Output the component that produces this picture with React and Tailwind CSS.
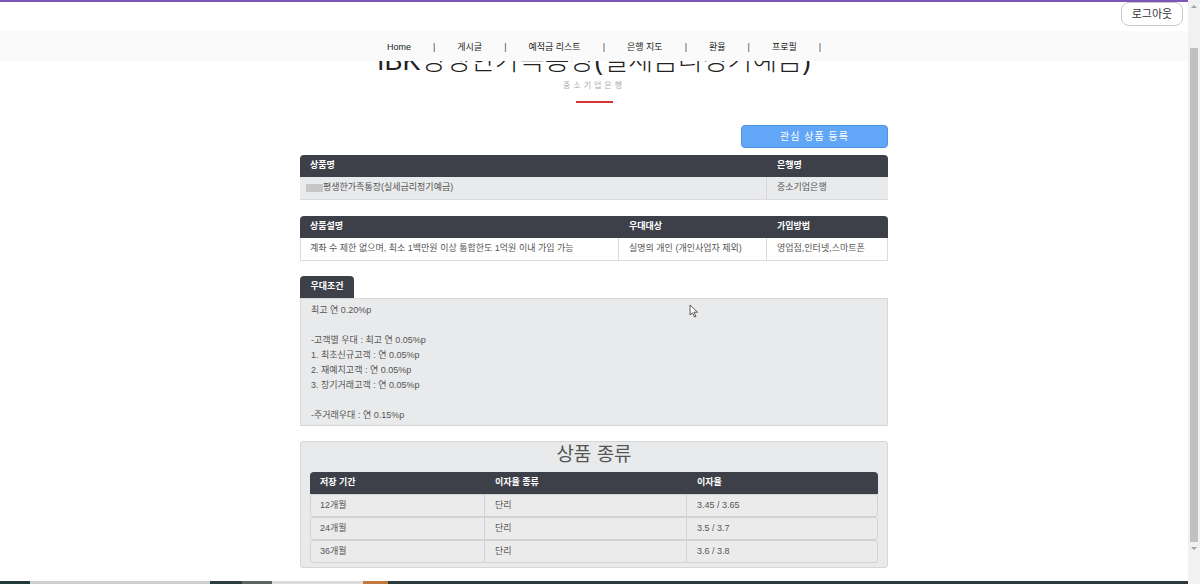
const font = { fontFamily: '"Liberation Sans", "Noto Sans CJK KR", sans-serif' };

const navItems = ['Home', '게시글', '예적금 리스트', '은행 지도', '환율', '프로필'];

const benefits = [
  '최고 연 0.20%p',
  '',
  '-고객별 우대 : 최고 연 0.05%p',
  '1. 최초신규고객 : 연 0.05%p',
  '2. 재예치고객 : 연 0.05%p',
  '3. 장기거래고객 : 연 0.05%p',
  '',
  '-주거래우대 : 연 0.15%p',
];

const options = [
  { term: '12개월', type: '단리', rate: '3.45 / 3.65' },
  { term: '24개월', type: '단리', rate: '3.5 / 3.7' },
  { term: '36개월', type: '단리', rate: '3.6 / 3.8' },
];

const Scrollbar = () => (
  <div className="w-[12px] h-full bg-[#f1f1f1] flex flex-col items-center">
    <div className="h-[12px] flex items-center justify-center">
      <div className="w-0 h-0 border-l-[3px] border-r-[3px] border-b-[3px] border-l-transparent border-r-transparent border-b-[#a3a3a3]" />
    </div>
    <div className="mt-[36px] w-[8px] h-[494px] bg-[#c1c1c1]" />
    <div className="h-[12px] flex items-center justify-center">
      <div className="w-0 h-0 border-l-[3px] border-r-[3px] border-t-[3px] border-l-transparent border-r-transparent border-t-[#a3a3a3]" />
    </div>
  </div>
);

export default function App() {
  return (
    <div className="flex w-[1200px] h-[584px] overflow-hidden bg-white text-[#555]" style={font}>
      <div className="flex-1 flex flex-col relative">
        <div className="h-[2px] bg-[#7b55b8]" />
        <div className="h-[29px] flex justify-end pr-[5px]">
          <button className="h-[24px] w-[62px] rounded-lg border border-[#c9c9c9] bg-white text-[11px] text-[#333]">
            로그아웃
          </button>
        </div>

        {/* nav */}
        <nav className="h-[30px] bg-[#fafafa] flex items-center justify-center pl-[42px] pt-[3px] text-[9px] text-[#222]">
          {navItems.map((item) => (
            <div key={item} className="flex items-center">
              <span>{item}</span>
              <span className="mx-[22px] text-[#444]">|</span>
            </div>
          ))}
        </nav>

        {/* title, scrolled under the nav */}
        <div className="h-[14px] overflow-hidden flex justify-center">
          <div className="-mt-[14px] leading-[28px] text-[27px] font-light text-[#222]">
            IBK평생한가족통장(실세금리정기예금)
          </div>
        </div>
        <div className="mt-[5px] leading-[12px] text-[8px] tracking-[3px] text-[#aaa] text-center">중소기업은행</div>
        <div className="mt-[9px] mx-auto w-[37px] h-[2px] bg-[#d6362e]" />

        <div className="w-[588px] mx-auto">
          <div className="mt-[22px] flex justify-end">
            <button className="h-[23px] w-[147px] rounded-[4px] bg-[#62a6f7] border border-[#4f93e6] text-white text-[10px] tracking-[1px]">
              관심 상품 등록
            </button>
          </div>

          {/* product / bank */}
          <div className="mt-[7px] text-[9px]">
            <div className="flex h-[22px] items-center bg-[#3e4049] rounded-t-[4px] text-white font-bold">
              <div className="w-[467px] pl-[10px]">상품명</div>
              <div className="flex-1 pl-[10px]">은행명</div>
            </div>
            <div className="flex h-[23px] bg-[#e9eaeb] border-b border-[#dcdcdc]">
              <div className="w-[467px] pl-[6px] flex items-center border-r border-[#d6d6d6]">
                <span className="inline-block w-[17px] h-[8px] bg-[#c6c6c6]" />
                <span>평생한가족통장(실세금리정기예금)</span>
              </div>
              <div className="flex-1 pl-[10px] flex items-center">중소기업은행</div>
            </div>
          </div>

          {/* description */}
          <div className="mt-[16px] text-[9px]">
            <div className="flex h-[22px] items-center bg-[#3e4049] rounded-t-[4px] text-white font-bold">
              <div className="w-[319px] pl-[10px]">상품설명</div>
              <div className="w-[148px] pl-[10px]">우대대상</div>
              <div className="flex-1 pl-[10px]">가입방법</div>
            </div>
            <div className="flex h-[23px] bg-white border border-t-0 border-[#dcdcdc]">
              <div className="w-[318px] pl-[9px] flex items-center border-r border-[#dcdcdc]">
                계좌 수 제한 없으며, 최소 1백만원 이상 통합한도 1억원 이내 가입 가능
              </div>
              <div className="w-[148px] pl-[10px] flex items-center border-r border-[#dcdcdc]">
                실명의 개인 (개인사업자 제외)
              </div>
              <div className="flex-1 pl-[10px] flex items-center">영업점,인터넷,스마트폰</div>
            </div>
          </div>

          {/* benefits */}
          <div className="mt-[15px] text-[9px]">
            <div className="h-[22px] w-[54px] bg-[#3e4049] rounded-t-[4px] text-white font-bold flex items-center justify-center">
              우대조건
            </div>
            <div className="h-[128px] bg-[#e9eaeb] border border-[#d6d6d6] pt-[4px] pl-[10px]">
              {benefits.map((line, i) => (
                <div key={i} className="h-[15px] leading-[15px]">{line}</div>
              ))}
            </div>
          </div>

          {/* options */}
          <div className="mt-[15px] h-[127px] bg-[#e9eaeb] border border-[#d6d6d6] rounded-[3px] px-[9px]">
            <div className="text-center text-[19px] leading-[26px] text-[#555]">상품 종류</div>
            <div className="mt-[4px] text-[9px]">
              <div className="flex h-[22px] items-center bg-[#3e4049] rounded-t-[4px] text-white font-bold">
                <div className="w-[175px] pl-[10px]">저장 기간</div>
                <div className="w-[202px] pl-[10px]">이자율 종류</div>
                <div className="flex-1 pl-[10px]">이자율</div>
              </div>
              {options.map((o) => (
                <div key={o.term} className="flex h-[23px] bg-[#ebebeb] border border-[#d2d2d2] rounded-[3px]">
                  <div className="w-[174px] pl-[9px] flex items-center border-r border-[#d2d2d2]">{o.term}</div>
                  <div className="w-[202px] pl-[10px] flex items-center border-r border-[#d2d2d2]">{o.type}</div>
                  <div className="flex-1 pl-[10px] flex items-center">{o.rate}</div>
                </div>
              ))}
            </div>
          </div>
        </div>

        {/* footer edge */}
        <div className="mt-auto h-[3px] flex">
          <div className="w-[30px] bg-[#233a3a]" />
          <div className="w-[180px] bg-[#cfcfcf]" />
          <div className="w-[32px] bg-[#2c3e3f]" />
          <div className="w-[30px] bg-[#5a6564]" />
          <div className="w-[91px] bg-[#dcdcdc]" />
          <div className="w-[25px] bg-[#c07a40]" />
          <div className="flex-1 bg-[#2c3a3c]" />
        </div>

        {/* mouse pointer */}
        <svg className="absolute left-[689px] top-[304px]" width="10" height="14" viewBox="0 0 10 14">
          <path d="M1 1 L1 11 L3.5 8.8 L5.5 13 L7 12.3 L5 8.2 L8.5 8.2 Z" fill="white" stroke="#333" strokeWidth="0.8" />
        </svg>
      </div>
      <Scrollbar />
    </div>
  );
}
